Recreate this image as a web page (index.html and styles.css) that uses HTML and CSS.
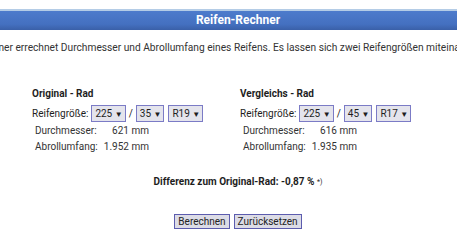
FILE: index.html
```html
<!DOCTYPE html>
<html>
<head>
  <title>Reifen-Rechner</title>
  <link rel="stylesheet" href="styles.css">
</head>
<body>
  <div class="page">
    <div class="header">Reifen-Rechner</div>
    <div class="intro">
      <span>Der Reifenrechner errechnet Durchmesser und Abrollumfang eines Reifens. Es lassen sich zwei Reifengrößen miteinander vergleichen.</span>
    </div>

    <div class="wheels">
      <div class="wheel">
        <div class="wheel-title">Original - Rad</div>
        <div class="size-row">
          <span class="label">Reifengröße:</span>
          <span class="select">225 <i>▼</i></span>
          <span class="slash">/</span>
          <span class="select">35 <i>▼</i></span>
          <span class="select">R19 <i>▼</i></span>
        </div>
        <div class="result">
          <span>Durchmesser:</span>
          <span>621 mm</span>
        </div>
        <div class="result">
          <span>Abrollumfang:</span>
          <span>1.952 mm</span>
        </div>
      </div>

      <div class="wheel">
        <div class="wheel-title">Vergleichs - Rad</div>
        <div class="size-row">
          <span class="label">Reifengröße:</span>
          <span class="select">225 <i>▼</i></span>
          <span class="slash">/</span>
          <span class="select">45 <i>▼</i></span>
          <span class="select">R17 <i>▼</i></span>
        </div>
        <div class="result">
          <span>Durchmesser:</span>
          <span>616 mm</span>
        </div>
        <div class="result">
          <span>Abrollumfang:</span>
          <span>1.935 mm</span>
        </div>
      </div>
    </div>

    <div class="diff">Differenz zum Original-Rad: -0,87 % <sup>*)</sup></div>

    <div class="buttons">
      <button>Berechnen</button>
      <button>Zurücksetzen</button>
    </div>
  </div>
</body>
</html>
```

FILE: styles.css
```css
body {
  font-family: Roboto, "Liberation Sans", sans-serif;
  font-size: 10px;
  color: #1e1e1e;
  margin: 0;
  padding: 0;
  background: #fff;
  overflow: hidden;
}
.page {
  width: 457px;
  overflow: hidden;
  padding-top: 9px;
}
.header {
  height: 19px;
  line-height: 19px;
  border-top: 2px solid #b4cce6;
  background: linear-gradient(#4d7bcc, #4470c0 70%, #3a60a8);
  color: #fff;
  font-weight: bold;
  font-size: 12px;
  text-align: center;
  padding-left: 19px;
}
.intro {
  display: flex;
  justify-content: center;
  white-space: nowrap;
  margin-top: 12px;
  padding-left: 12px;
  font-size: 10.2px;
  color: #333;
}
.wheels {
  display: grid;
  grid-template-columns: 208px 208px;
  padding-left: 32px;
  margin-top: 35px;
}
.wheel-title {
  font-weight: bold;
  height: 16px;
}
.size-row {
  display: flex;
  align-items: center;
  height: 19px;
}
.label {
  margin-right: 3px;
}
.select {
  display: inline-block;
  height: 15px;
  line-height: 15px;
  padding: 0 2px 0 3px;
  border: 1px solid #7b7bc6;
  background: #e4e4ec;
  margin-right: 4px;
}
.select i {
  font-style: normal;
  font-size: 8px;
}
.slash {
  margin: 0 3px 0 -1px;
}
.result {
  display: flex;
  justify-content: space-between;
  width: 114px;
  padding-left: 3px;
  height: 16px;
  line-height: 16px;
  color: #333;
}
.result:first-of-type {
  margin-top: 2px;
}
.diff {
  margin-top: 21px;
  text-align: center;
  font-weight: bold;
  padding-left: 19px;
}
.diff sup {
  font-weight: normal;
  font-size: 7px;
  vertical-align: middle;
}
.buttons {
  display: flex;
  justify-content: center;
  gap: 4px;
  margin-top: 27px;
  padding-left: 19px;
}
.buttons button {
  font-family: Roboto, "Liberation Sans", sans-serif;
  font-size: 10px;
  color: #222;
  height: 15px;
  line-height: 13px;
  padding: 0 3px;
  border: 1px solid #5c5cae;
  background: #dcdce6;
  border-radius: 0;
}
```
